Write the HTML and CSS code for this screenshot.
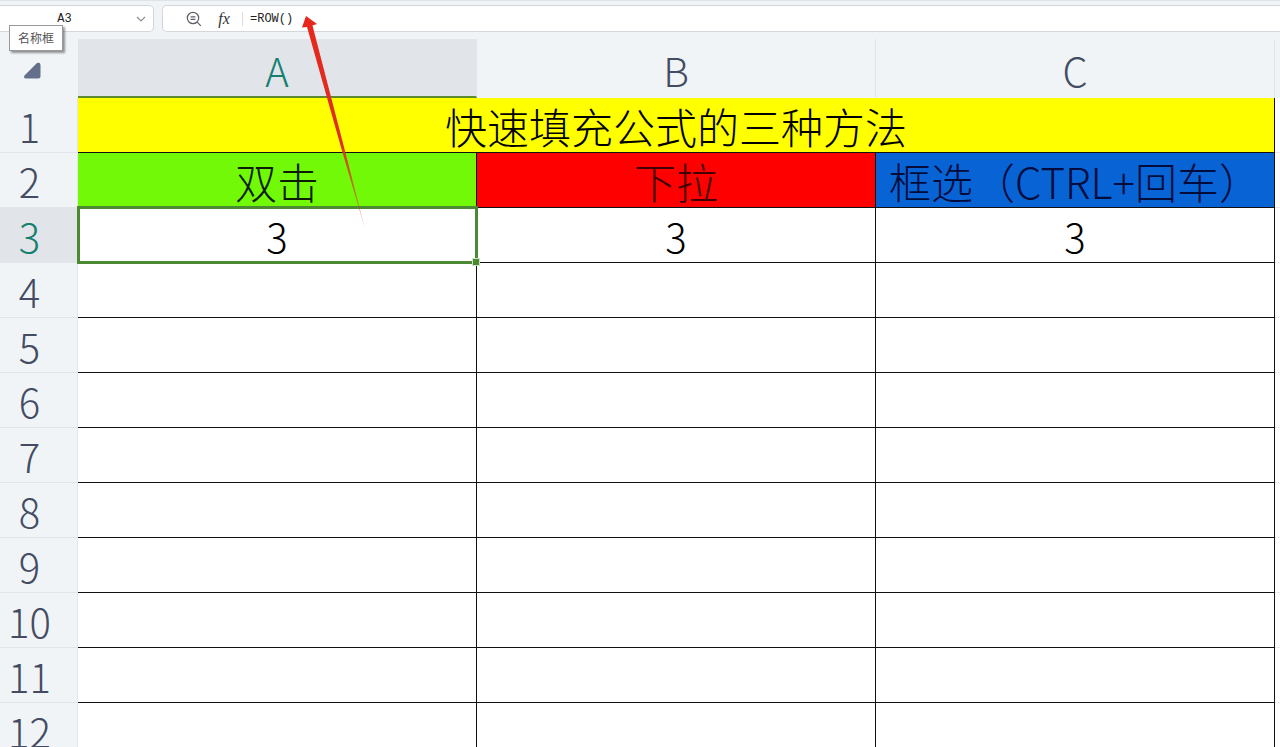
FILE: index.html
```
<!DOCTYPE html>
<html lang="zh-CN">
<head>
  <meta charset="UTF-8">
  <title>快速填充公式的三种方法</title>
  <link rel="stylesheet" href="styles.css">
</head>
<body>
  <header class="formula-bar">
    <div class="name-box">
      <input type="text" id="cell-name" value="A3" aria-labelledby="name-tip">
      <button class="drop" aria-label="展开">
        <svg width="10" height="6" viewBox="0 0 10 6"><path d="M1 1l4 4 4-4" fill="none" stroke="#8b8f94" stroke-width="1.2"/></svg>
      </button>
      <label class="tooltip" id="name-tip" for="cell-name">名称框</label>
    </div>
    <div class="formula-box">
      <button class="zoom-btn" aria-label="查看">
        <svg width="16" height="16" viewBox="0 0 16 16" fill="none" stroke="#5d6166" stroke-width="1.2">
          <circle cx="7" cy="7" r="5.7"/>
          <path d="M11.2 11.2l3.600 3.600M4.600 5.800h4.800M4.600 8.400h4.800"/>
        </svg>
      </button>
      <button class="fx-btn" aria-label="插入函数"><i>fx</i></button>
      <input type="text" class="formula" value="=ROW()" aria-label="公式">
    </div>
  </header>

  <main class="sheet">
    <table>
      <colgroup>
        <col class="col-head">
        <col><col><col>
        <col class="col-rest">
      </colgroup>
      <thead>
        <tr>
          <th class="corner"><svg width="18" height="17" viewBox="0 0 18 17"><path d="M14 1Q17.500 0 17.500 3V14Q17.500 16.500 15 16.500H3Q0 16 1.500 13.500Z" fill="#646f8c"/></svg></th>
          <th class="active">A</th>
          <th>B</th>
          <th>C</th>
          <th class="rest"></th>
        </tr>
      </thead>
      <tbody>
        <tr><th>1</th><td class="title" colspan="3">快速填充公式的三种方法</td><td class="rest"></td></tr>
        <tr><th>2</th><td class="green">双击</td><td class="red">下拉</td><td class="blue">框选（CTRL+回车）</td><td class="rest"></td></tr>
        <tr><th class="active">3</th><td class="selected">3</td><td>3</td><td>3</td><td class="rest"></td></tr>
        <tr><th>4</th><td></td><td></td><td></td><td class="rest"></td></tr>
        <tr><th>5</th><td></td><td></td><td></td><td class="rest"></td></tr>
        <tr><th>6</th><td></td><td></td><td></td><td class="rest"></td></tr>
        <tr><th>7</th><td></td><td></td><td></td><td class="rest"></td></tr>
        <tr><th>8</th><td></td><td></td><td></td><td class="rest"></td></tr>
        <tr><th>9</th><td></td><td></td><td></td><td class="rest"></td></tr>
        <tr><th>10</th><td></td><td></td><td></td><td class="rest"></td></tr>
        <tr><th>11</th><td></td><td></td><td></td><td class="rest"></td></tr>
        <tr><th>12</th><td></td><td></td><td></td><td class="rest"></td></tr>
      </tbody>
    </table>
  </main>

  <!-- arrow pointing at the formula -->
  <svg class="arrow" width="70" height="220" viewBox="0 0 70 220">
    <defs>
      <linearGradient id="fade" x1="0" y1="0" x2="0" y2="1">
        <stop offset="0" stop-color="#e8261c"/>
        <stop offset="0.600" stop-color="#dd3020"/>
        <stop offset="1" stop-color="#dd3020" stop-opacity="0.300"/>
      </linearGradient>
    </defs>
    <path d="M4 1L15 9L10.500 10.500L42.500 134L63 214L39.500 134L5 12L0 12.500Z" fill="url(#fade)"/>
  </svg>
</body>
</html>
```
FILE: styles.css
```
* {
  box-sizing: border-box;
}
body {
  margin: 0;
  height: 100vh;
  display: flex;
  flex-direction: column;
  overflow: hidden;
  position: relative;
  background: #f0f4f7;
  font-family: 'Noto Sans CJK SC', sans-serif;
}
button, input {
  border: none;
  background: none;
  padding: 0;
  outline: none;
}
.formula-bar {
  display: flex;
  gap: 8px;
  height: 39px;
  flex: none;
  padding: 4px 0 7px;
  border-top: 1px solid #dfe3e7;
}
.name-box, .formula-box {
  display: flex;
  align-items: center;
  background: #fff;
  border: 1px solid #d3d6da;
}
.name-box {
  position: relative;
  width: 154px;
  border-left: none;
  border-radius: 0 5px 5px 0;
}
.name-box input {
  flex: 1;
  min-width: 0;
  text-align: center;
}
.name-box input, .formula {
  font-family: 'Liberation Mono', monospace;
  font-size: 12px;
  color: #222;
}
.drop {
  display: flex;
  width: 24px;
  justify-content: center;
}
.tooltip {
  position: absolute;
  left: 9px;
  top: 19px;
  padding: 0 8px;
  line-height: 24px;
  font-size: 12px;
  color: #555;
  background: #fff;
  border: 1px solid #999;
  box-shadow: 2px 2px 2px rgba(0,0,0,0.4);
  z-index: 2;
}
.formula-box {
  flex: 1;
  border-right: none;
  border-radius: 5px 0 0 5px;
  padding-left: 23px;
}
.zoom-btn {
  display: flex;
}
.fx-btn {
  margin-left: 14px;
  width: 16px;
  font: 16px 'Liberation Serif', serif;
  color: #333;
}
.formula {
  flex: 1;
  margin-left: 10px;
  padding-left: 7px;
  border-left: 1px solid #ddd;
}
.sheet {
  flex: 1;
  min-height: 0;
  overflow: hidden;
}
table {
  width: 100%;
  table-layout: fixed;
  border-collapse: separate;
  border-spacing: 0;
}
.col-head {
  width: 78px;
}
.col-rest {
  width: 5px;
}
th, td {
  height: 55px;
  padding: 2px 0 0;
  font-size: 40px;
  font-weight: 300;
  line-height: 50px;
  text-align: center;
  white-space: nowrap;
}
th {
  color: #444c63;
  background: #f0f4f7;
}
thead th {
  height: 59px;
  border-right: 1px solid #e2e6ea;
}
thead th.corner {
  padding: 4px 14px 0 0;
  border-right: none;
}
.corner svg {
  display: block;
  margin: 0 auto;
}
th.active {
  color: #158070;
  background: #e1e4e9;
}
thead th.active {
  padding-top: 4px;
  border-bottom: 2px solid #5d8a2d;
}
tbody th {
  padding-right: 18px;
  border-right: 1px solid #e2e6ea;
  border-bottom: 1px solid #e2e6ea;
}
td {
  color: #000;
  background: #fff;
  border-right: 1px solid #111;
  border-bottom: 1px solid #111;
}
.rest {
  border-right: none;
}
td.rest {
  border-bottom: 1px solid #e8e8e8;
}
.title, .green, .red, .blue {
  font-size: 42px;
}
.title {
  background: #ff0;
}
.green {
  color: #0a1c02;
  background: #72f908;
}
.red {
  color: #400000;
  background: #f00;
}
.blue {
  color: #020c3c;
  background: #0864d4;
}
.selected {
  position: relative;
}
/* selection frame and fill handle */
.selected::before {
  content: '';
  position: absolute;
  inset: -2px -2px -2px -1px;
  border: 3px solid #4b8a32;
}
.selected::after {
  content: '';
  position: absolute;
  right: -4px;
  bottom: -4px;
  width: 6px;
  height: 6px;
  background: #4b8a32;
  border: 1px solid #cfe3c4;
}
.arrow {
  position: absolute;
  left: 302px;
  top: 15px;
  pointer-events: none;
}
```
